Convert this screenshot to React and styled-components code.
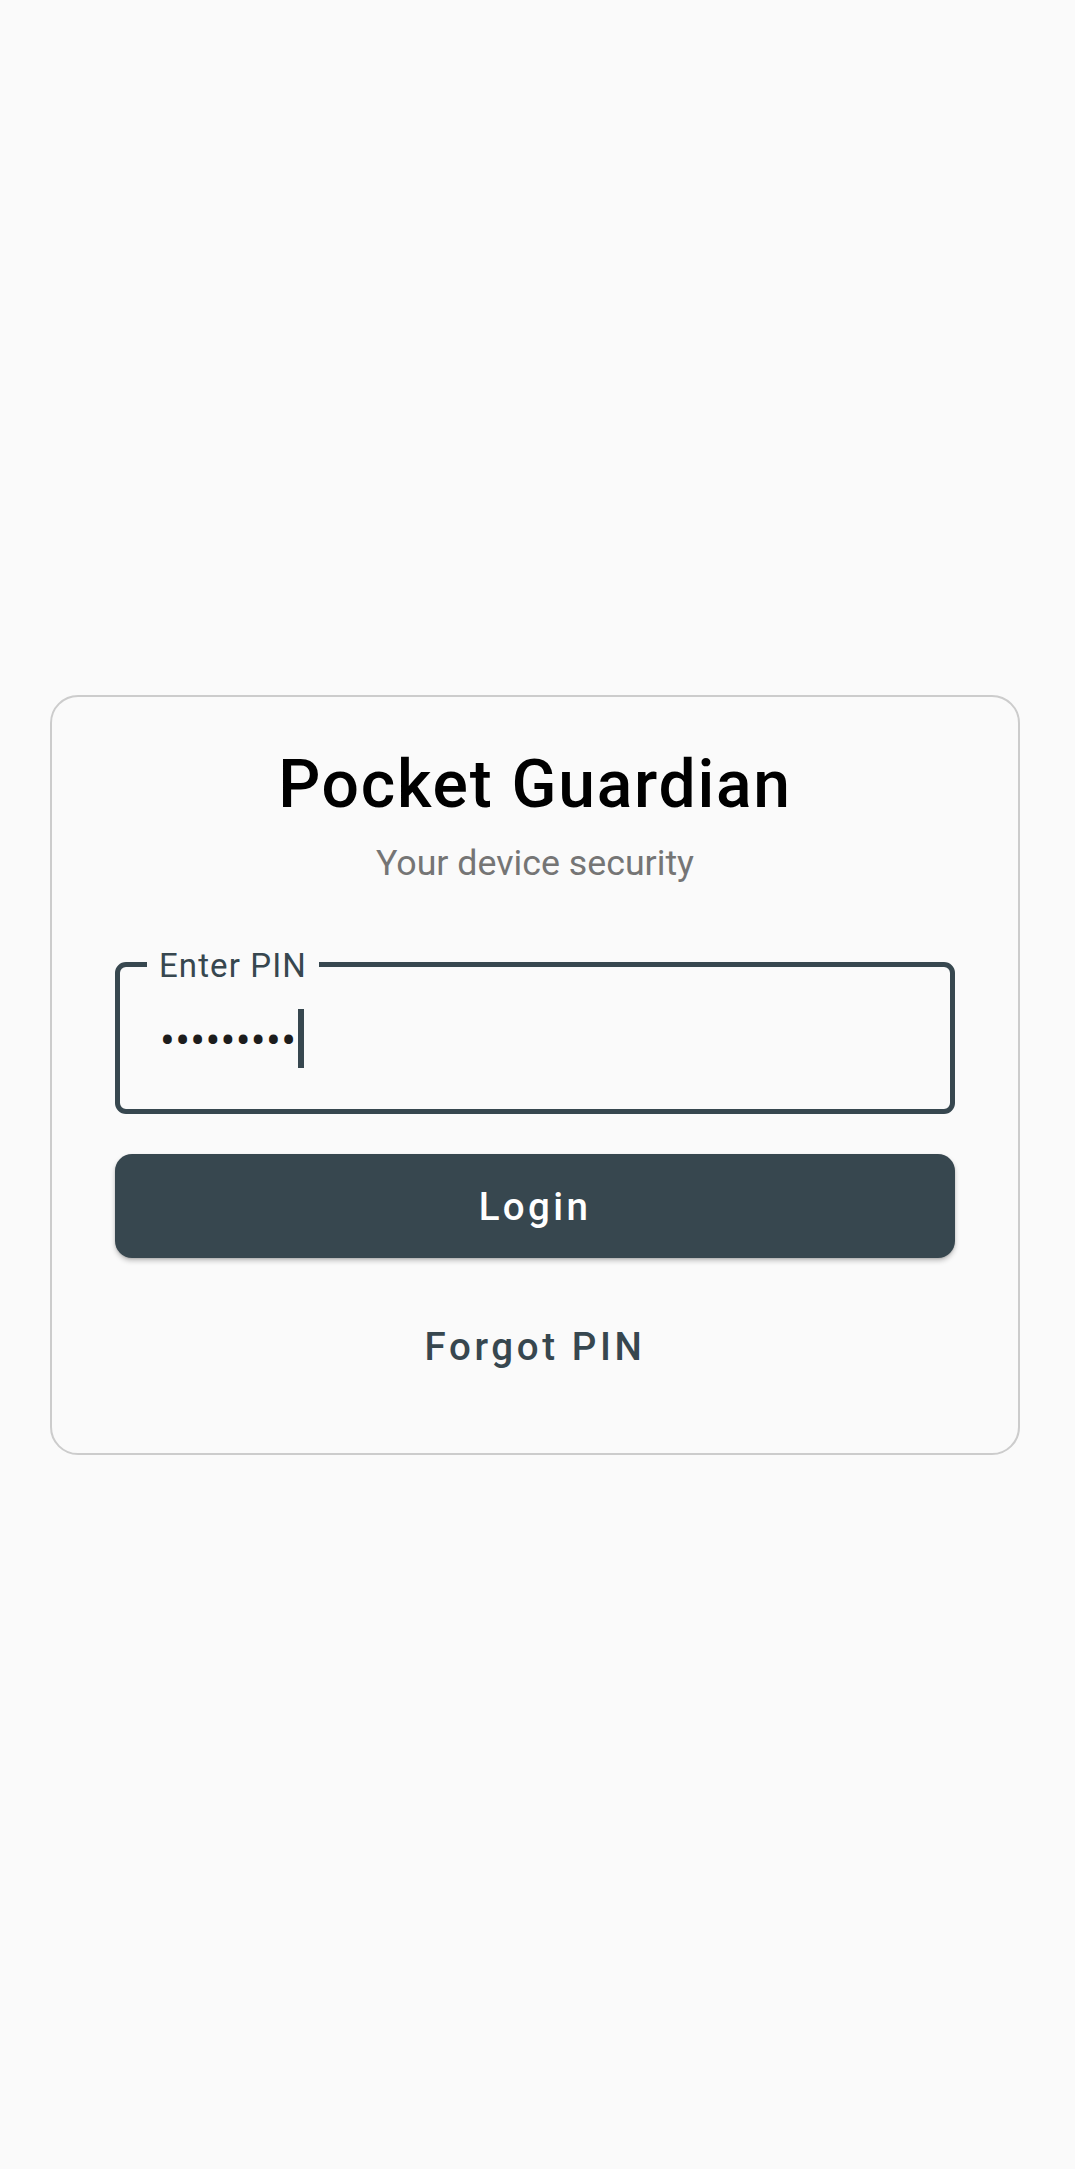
import React from "react";
import styled, { createGlobalStyle } from "styled-components";

const GlobalStyle = createGlobalStyle`
  html, body {
    margin: 0;
    padding: 0;
    background: #fafafa;
  }
  body {
    font-family: Roboto, "Noto Sans", "Liberation Sans", sans-serif;
  }
  * { box-sizing: border-box; }
`;

const Page = styled.div`
  min-height: 2169px;
  background: #fafafa;
  padding: 695px 55px 0 50px;
`;

const Card = styled.div`
  width: 970px;
  border: 2px solid #cccccc;
  border-radius: 28px;
  background: #fafafa;
  padding: 49px 63px 84px;
  display: flex;
  flex-direction: column;
  align-items: stretch;
`;

const Title = styled.h1`
  margin: 0;
  font-size: 66px;
  font-weight: 500;
  line-height: normal;
  letter-spacing: 1.75px;
  color: #000000;
  text-align: center;
`;

const Subtitle = styled.p`
  margin: 19px 0 0;
  font-size: 35.75px;
  font-weight: 400;
  line-height: normal;
  color: #757575;
  text-align: center;
`;

const Field = styled.div`
  position: relative;
  margin-top: 78px;
  height: 152px;
  border: 5px solid #37474f;
  border-radius: 11px;
  display: flex;
  align-items: center;
  padding-left: 40px;
`;

const FieldLabel = styled.label`
  position: absolute;
  top: -20px;
  left: 27px;
  padding: 0 12px;
  background: #fafafa;
  font-size: 33px;
  line-height: 38px;
  letter-spacing: 1.1px;
  color: #37474f;
`;

const Dots = styled.span`
  margin-top: 6px;
  font-size: 44px;
  color: #1c1c1c;
  line-height: 1;
  letter-spacing: 0.3px;
`;

const Caret = styled.span`
  display: inline-block;
  width: 6px;
  height: 59px;
  margin-left: 2px;
  background: #37474f;
`;

const Button = styled.button`
  margin-top: 40px;
  height: 104px;
  border: none;
  border-radius: 17px;
  background: #37474f;
  box-shadow: 0 3px 5px rgba(0, 0, 0, 0.22), 0 1px 2px rgba(0, 0, 0, 0.12);
  color: #ffffff;
  font-family: Roboto, "Noto Sans", sans-serif;
  font-size: 38.5px;
  font-weight: 500;
  letter-spacing: 3.4px;
  cursor: pointer;
`;

const TextButton = styled.button`
  align-self: center;
  margin-top: 66px;
  padding: 0;
  border: none;
  background: transparent;
  color: #37474f;
  font-family: Roboto, "Noto Sans", sans-serif;
  font-size: 38.5px;
  font-weight: 500;
  line-height: normal;
  letter-spacing: 3.6px;
  cursor: pointer;
`;

export default function App() {
  return (
    <>
      <GlobalStyle />
      <Page>
        <Card>
          <Title>Pocket Guardian</Title>
          <Subtitle>Your device security</Subtitle>
          <Field>
            <FieldLabel>Enter PIN</FieldLabel>
            <Dots>•••••••••</Dots>
            <Caret />
          </Field>
          <Button>Login</Button>
          <TextButton>Forgot PIN</TextButton>
        </Card>
      </Page>
    </>
  );
}
